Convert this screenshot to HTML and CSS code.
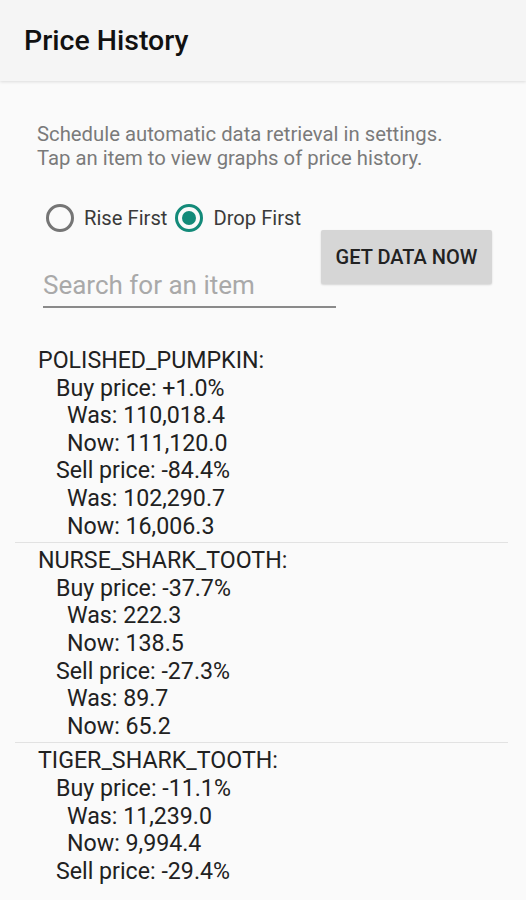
FILE: index.html
```html
<!DOCTYPE html>
<html lang="en">
<head>
    <meta charset="UTF-8">
    <meta name="viewport" content="width=device-width, initial-scale=1.0">
    <title>Price History</title>
    <link rel="stylesheet" href="styles.css">
</head>
<body>

    <div class="app-bar">
        <h1 class="app-title">Price History</h1>
    </div>

    <p class="hint">Schedule automatic data retrieval in settings.<br>Tap an item to view graphs of price history.</p>

    <div class="controls">
        <div class="controls-left">
            <div class="radio-group">
                <label class="radio">
                    <svg width="30" height="30" viewBox="0 0 30 30"><circle cx="15" cy="15" r="12.5" fill="none" stroke="#757575" stroke-width="3"/></svg>
                    <span>Rise First</span>
                </label>
                <label class="radio">
                    <svg width="30" height="30" viewBox="0 0 30 30"><circle cx="15" cy="15" r="12.5" fill="none" stroke="#138a79" stroke-width="3"/><circle cx="15" cy="15" r="7" fill="#138a79"/></svg>
                    <span>Drop First</span>
                </label>
            </div>
            <input class="search" type="text" placeholder="Search for an item">
        </div>
        <button class="get-data">GET DATA NOW</button>
    </div>

    <div class="item-list">
        <div class="item">
            <div class="name">POLISHED_PUMPKIN:</div>
            <div class="price">Buy price: +1.0%</div>
            <div class="value">Was: 110,018.4</div>
            <div class="value">Now: 111,120.0</div>
            <div class="price">Sell price: -84.4%</div>
            <div class="value">Was: 102,290.7</div>
            <div class="value">Now: 16,006.3</div>
        </div>
        <div class="item">
            <div class="name">NURSE_SHARK_TOOTH:</div>
            <div class="price">Buy price: -37.7%</div>
            <div class="value">Was: 222.3</div>
            <div class="value">Now: 138.5</div>
            <div class="price">Sell price: -27.3%</div>
            <div class="value">Was: 89.7</div>
            <div class="value">Now: 65.2</div>
        </div>
        <div class="item">
            <div class="name">TIGER_SHARK_TOOTH:</div>
            <div class="price">Buy price: -11.1%</div>
            <div class="value">Was: 11,239.0</div>
            <div class="value">Now: 9,994.4</div>
            <div class="price">Sell price: -29.4%</div>
        </div>
    </div>

</body>
</html>
```

FILE: styles.css
```css
body {
    margin: 0;
    height: 900px;
    overflow: hidden;
    font-family: Roboto, "Liberation Sans", sans-serif;
    background: #fafafa;
    color: #212121;
}

.app-bar {
    height: 81px;
    display: flex;
    align-items: center;
    padding-left: 24px;
    background: #f5f5f5;
    box-shadow: 0 1px 3px rgba(0, 0, 0, 0.12);
}

.app-title {
    margin: 0;
    font-size: 28.5px;
    font-weight: 500;
    color: #111;
}

.hint {
    margin: 41px 0 0 37px;
    font-size: 20.3px;
    line-height: 24px;
    color: #7a7a7a;
}

.controls {
    display: flex;
    margin-top: 33px;
    padding-left: 43px;
}

.controls-left {
    width: 278px;
}

.radio-group {
    display: flex;
    align-items: center;
    height: 30px;
    padding-left: 2px;
}

.radio {
    display: flex;
    align-items: center;
    gap: 9px;
    margin-right: 7px;
    font-size: 20.2px;
    color: #3a3a3a;
}

.search {
    display: block;
    width: 293px;
    height: 42px;
    margin-top: 31px;
    padding: 0;
    border: none;
    border-bottom: 2px solid #8a8a8a;
    background: transparent;
    font-family: inherit;
    font-size: 26px;
    outline: none;
}

.search::placeholder {
    color: #a9a9a9;
}

.get-data {
    width: 171px;
    height: 54px;
    margin-top: 27px;
    padding: 0;
    border: none;
    border-radius: 2px;
    background: #d6d6d6;
    box-shadow: 0 1px 2px rgba(0, 0, 0, 0.15);
    font-family: inherit;
    font-size: 20px;
    font-weight: 500;
    color: #222;
}

.item-list {
    margin-top: 35px;
    padding: 0 18px 0 15px;
}

.item {
    padding: 4px 0 2px 23px;
    font-size: 23.2px;
    line-height: 27.6px;
    border-bottom: 1px solid #e2e2e2;
}

.item:last-child {
    border-bottom: none;
}

.price {
    padding-left: 18px;
}

.value {
    padding-left: 29px;
}
```
